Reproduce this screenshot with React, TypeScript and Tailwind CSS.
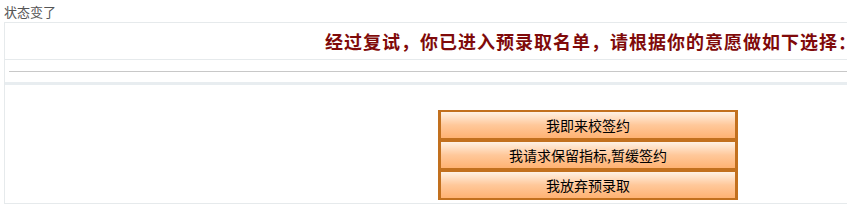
const font = { fontFamily: '"Noto Sans CJK SC", "Noto Sans", sans-serif' };

const choices = ["我即来校签约", "我请求保留指标,暂缓签约", "我放弃预录取"];

function ChoiceButton({ label }: { label: string }) {
  return (
    <button
      type="button"
      className="flex h-[30px] w-[300px] items-center justify-center border-x-[3px] border-y-2 border-[#c2701e] bg-gradient-to-b from-[#fff1e4] via-[#ffc89a] to-[#ffb272] text-[14px] leading-none text-black"
    >
      {label}
    </button>
  );
}

export default function App() {
  return (
    <div className="w-[847px] h-[221px] overflow-hidden bg-white" style={font}>
      <div className="h-[22px] pl-[4px] pt-[4px] text-[13px] leading-[15px] text-[#555]">状态变了</div>

      <div className="ml-[4px] w-[860px] border border-[#e6eaec]">
        {/* 提示标题 */}
        <div className="flex h-[37px] items-center justify-end border-b border-[#e6eaec] pr-[6px]">
          <h2 className="text-[18px] font-bold leading-none tracking-[1px] text-[#7f0a0a]">
            经过复试，你已进入预录取名单，请根据你的意愿做如下选择：
          </h2>
        </div>

        {/* 分隔线 */}
        <div className="h-[25px] border-b-[3px] border-[#e8edf0] pl-[4px] pt-[11px]">
          <div className="h-px bg-[#c8c8c8]" />
        </div>

        {/* 选择按钮 */}
        <div className="flex h-[118px] flex-col pl-[433px] pt-[25px]">
          {choices.map((c) => (
            <ChoiceButton key={c} label={c} />
          ))}
        </div>
      </div>
    </div>
  );
}
